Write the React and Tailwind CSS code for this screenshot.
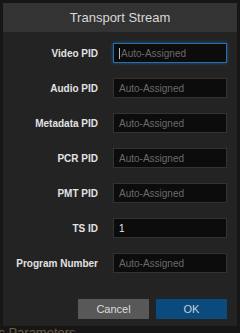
import React from "react";

const rows = [
  { label: "Video PID", value: "", focus: true },
  { label: "Audio PID", value: "" },
  { label: "Metadata PID", value: "" },
  { label: "PCR PID", value: "" },
  { label: "PMT PID", value: "" },
  { label: "TS ID", value: "1" },
  { label: "Program Number", value: "" },
];

export default function App() {
  return (
    <div
      className="w-[240px] h-[333px] overflow-hidden bg-[#161616] pt-[3px]"
      style={{ fontFamily: '"Liberation Sans", Arial, sans-serif' }}
    >
      <div className="ml-[3px] w-[234px] h-[323px] bg-[#232323] flex flex-col">
        <div className="h-[29px] bg-[#333333] flex items-center justify-center text-[13px] text-[#d8d8d8] pt-[1px]">
          Transport Stream
        </div>
        <div className="flex flex-col gap-[15px] pt-[11px] pr-[10px]">
          {rows.map((r) => (
            <div key={r.label} className="flex items-center h-[20px]">
              <div className="w-[95px] text-right text-[10px] font-bold text-[#e2e2e2]">
                {r.label}
              </div>
              <div
                className={
                  "ml-[15px] w-[114px] h-[20px] flex items-center px-[5px] text-[10px] bg-[#0c0c0c] border " +
                  (r.focus
                    ? "border-[#2b6eae] shadow-[0_0_3px_#1d5c94]"
                    : "border-[#333333]")
                }
              >
                {r.focus && <span className="w-px h-[11px] bg-[#bbbbbb] mr-[1px]" />}
                {r.value ? (
                  <span className="text-[#e6e6e6]">{r.value}</span>
                ) : (
                  <span className="text-[#6a6a6a]">Auto-Assigned</span>
                )}
              </div>
            </div>
          ))}
        </div>
        <div className="flex justify-end gap-[7px] pr-[10px] mt-[26px]">
          <button className="w-[71px] h-[20px] bg-[#585858] text-[#dcdcdc] text-[11px]">
            Cancel
          </button>
          <button className="w-[71px] h-[20px] bg-[#0b4a7c] text-[#c8d0d8] text-[11px]">
            OK
          </button>
        </div>
      </div>
      <div className="ml-[-27px] mt-[-1px] text-[13px] leading-[15px] text-[#6e5c3e] whitespace-nowrap">
        Basic Parameters
      </div>
    </div>
  );
}
